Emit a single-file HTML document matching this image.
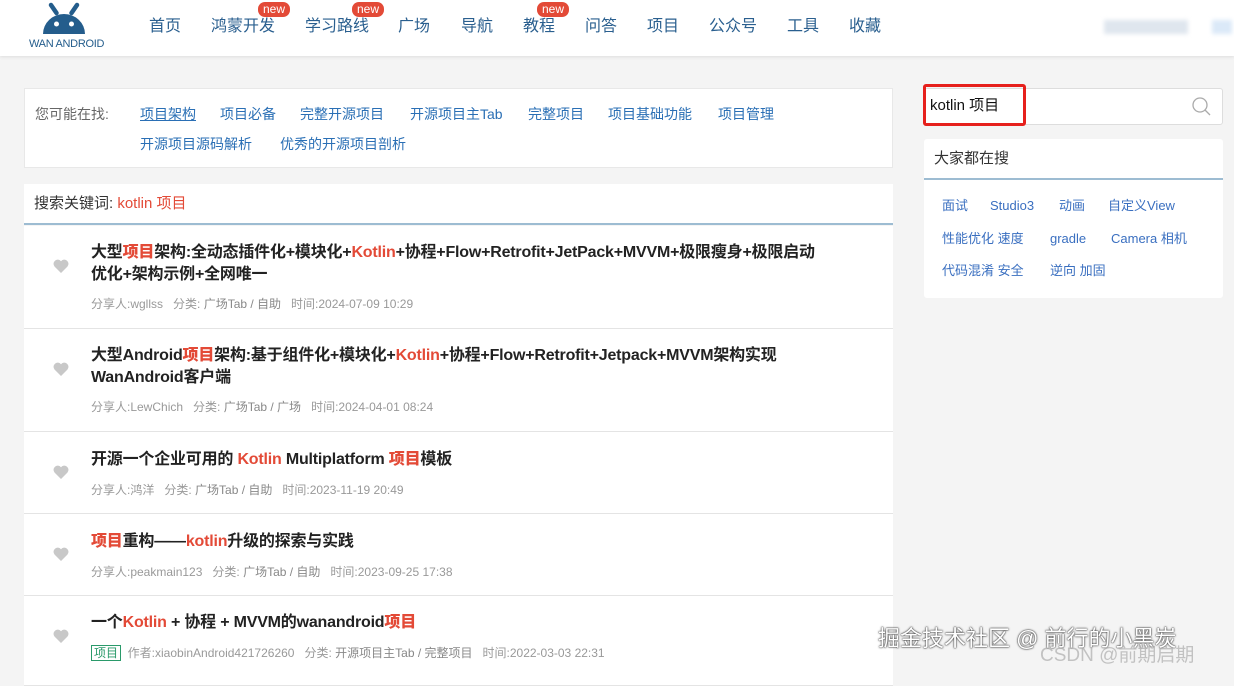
<!DOCTYPE html>
<html><head><meta charset="utf-8"><style>
*{margin:0;padding:0;box-sizing:border-box}
body{width:1234px;height:675px;overflow:hidden;background:#f4f4f4;font-family:"Liberation Sans","Noto Sans CJK SC",sans-serif;position:relative}
.hd{position:absolute;left:0;top:0;width:1234px;height:56px;background:#fff;box-shadow:0 1px 3px #ddd}
.nav a{position:absolute;top:15px;font-size:16px;line-height:24px;color:#2a5f8f;text-decoration:none}
.new{position:absolute;top:2px;background:#e34a37;color:#fff;font-size:12px;border-radius:7px;padding:0 5px;line-height:15px}
.box{position:absolute;background:#fff}
.sug span{position:absolute;font-size:14px;line-height:20px;color:#2a6fb5}
.item{position:absolute;left:24px;width:869px;background:#fff;border-bottom:1px solid #e4e4e4}
.t{position:absolute;left:67px;font-size:16px;font-weight:bold;color:#222;line-height:22px;width:735px;letter-spacing:-0.2px}
.t b{color:#e34a37}
.m{position:absolute;left:67px;font-size:12px;line-height:16px;color:#999}
.m i{font-style:normal;color:#888}
.heart{position:absolute;left:29px}
.hot span{position:absolute;font-size:13px;line-height:18px;color:#3a6fc0}
</style></head><body>
<div class="hd">
<svg style="position:absolute;left:41px;top:2px" width="46" height="34" viewBox="0 0 46 34"><path d="M10 3 L15.5 11 M36 3 L30.5 11" stroke="#245d8c" stroke-width="4.5" stroke-linecap="round"/><path d="M2 32 A21 20 0 0 1 44 32 Z" fill="#245d8c"/><circle cx="15.5" cy="22" r="2.5" fill="#fff"/><circle cx="30.5" cy="22" r="2.5" fill="#fff"/></svg>
<div style="position:absolute;left:29px;top:38px;font-size:11px;color:#245d8c;letter-spacing:-0.3px">WAN ANDROID</div>
<div class="nav">
<a style="left:149px">首页</a><a style="left:211px">鸿蒙开发</a><span class="new" style="left:258px">new</span>
<a style="left:305px">学习路线</a><span class="new" style="left:352px">new</span>
<a style="left:398px">广场</a><a style="left:461px">导航</a><a style="left:523px">教程</a><span class="new" style="left:537px">new</span>
<a style="left:585px">问答</a><a style="left:647px">项目</a><a style="left:709px">公众号</a><a style="left:787px">工具</a><a style="left:849px">收藏</a>
</div>
<div style="position:absolute;left:1104px;top:20px;width:84px;height:14px;background:#dfe6ee;filter:blur(2px)"></div>
<div style="position:absolute;left:1212px;top:20px;width:20px;height:14px;background:#dbe9f8;filter:blur(2px)"></div>
</div>
<div class="box sug" style="left:24px;top:88px;width:869px;height:80px;border:1px solid #e8e8e8">
<span style="left:10px;top:15px;color:#666">您可能在找:</span>
<span style="left:115px;top:15px;text-decoration:underline">项目架构</span><span style="left:195px;top:15px">项目必备</span><span style="left:275px;top:15px">完整开源项目</span><span style="left:385px;top:15px">开源项目主Tab</span><span style="left:503px;top:15px">完整项目</span><span style="left:583px;top:15px">项目基础功能</span><span style="left:693px;top:15px">项目管理</span>
<span style="left:115px;top:45px">开源项目源码解析</span><span style="left:255px;top:45px">优秀的开源项目剖析</span>
</div>
<div class="box" style="left:24px;top:184px;width:869px;height:41px;border-bottom:2px solid #9dbcd2">
<span style="position:absolute;left:10px;top:10px;font-size:15px;line-height:20px;color:#333">搜索关键词:&nbsp;<span style="color:#e34a37">kotlin 项目</span></span></div>
<svg width="0" height="0" style="position:absolute"><defs><symbol id="h" viewBox="0 0 16 14"><path d="M8 14 L1.5 7.5 A3.8 3.8 0 0 1 8 2.2 A3.8 3.8 0 0 1 14.5 7.5 Z" fill="#c8c8c8"/></symbol></defs></svg>
<div class="item" style="top:226px;height:103px"><svg class="heart" style="top:33px" width="16" height="14"><use href="#h"/></svg>
<div class="t" style="top:16px">大型<b>项目</b>架构:全动态插件化+模块化+<b>Kotlin</b>+协程+Flow+Retrofit+JetPack+MVVM+极限瘦身+极限启动优化+架构示例+全网唯一</div>
<div class="m" style="top:70px">分享人:wgllss &nbsp; 分类: <i>广场Tab / 自助</i> &nbsp; 时间:2024-07-09 10:29</div></div>
<div class="item" style="top:329px;height:103px"><svg class="heart" style="top:33px" width="16" height="14"><use href="#h"/></svg>
<div class="t" style="top:16px">大型Android<b>项目</b>架构:基于组件化+模块化+<b>Kotlin</b>+协程+Flow+Retrofit+Jetpack+MVVM架构实现WanAndroid客户端</div>
<div class="m" style="top:70px">分享人:LewChich &nbsp; 分类: <i>广场Tab / 广场</i> &nbsp; 时间:2024-04-01 08:24</div></div>
<div class="item" style="top:432px;height:82px"><svg class="heart" style="top:33px" width="16" height="14"><use href="#h"/></svg>
<div class="t" style="top:17px">开源一个企业可用的 <b>Kotlin</b> Multiplatform <b>项目</b>模板</div>
<div class="m" style="top:50px">分享人:鸿洋 &nbsp; 分类: <i>广场Tab / 自助</i> &nbsp; 时间:2023-11-19 20:49</div></div>
<div class="item" style="top:514px;height:82px"><svg class="heart" style="top:33px" width="16" height="14"><use href="#h"/></svg>
<div class="t" style="top:17px"><b>项目</b>重构——<b>kotlin</b>升级的探索与实践</div>
<div class="m" style="top:50px">分享人:peakmain123 &nbsp; 分类: <i>广场Tab / 自助</i> &nbsp; 时间:2023-09-25 17:38</div></div>
<div class="item" style="top:596px;height:90px"><svg class="heart" style="top:33px" width="16" height="14"><use href="#h"/></svg>
<div class="t" style="top:16px">一个<b>Kotlin</b> + 协程 + MVVM的wanandroid<b>项目</b></div>
<div class="m" style="top:49px"><span style="border:1px solid #2a9a6a;color:#2a9a6a;padding:0 2px">项目</span> &nbsp;作者:xiaobinAndroid421726260 &nbsp; 分类: <i>开源项目主Tab / 完整项目</i> &nbsp; 时间:2022-03-03 22:31</div></div>
<div class="box" style="left:924px;top:88px;width:299px;height:37px;border:1px solid #ddd;border-radius:3px">
<svg style="position:absolute;right:10px;top:8px" width="20" height="20"><circle cx="8" cy="8" r="7" stroke="#aaa" fill="none" stroke-width="1.3"/><path d="M13 13 L18 18" stroke="#aaa" stroke-width="1.3"/></svg></div>
<div style="position:absolute;left:923px;top:84px;width:103px;height:42px;border:3px solid #e6201c;border-radius:3px"></div>
<div style="position:absolute;left:930px;top:96px;font-size:15px;line-height:20px;color:#111">kotlin 项目</div>
<div class="box hot" style="left:924px;top:139px;width:299px;height:159px;border-radius:3px">
<div style="position:absolute;left:0;top:0;width:299px;height:41px;border-bottom:2px solid #9dbcd2;font-size:15px;line-height:20px;color:#333;padding:10px 10px">大家都在搜</div>
<span style="left:18px;top:58px">面试</span><span style="left:66px;top:58px">Studio3</span><span style="left:135px;top:58px">动画</span><span style="left:184px;top:58px">自定义View</span>
<span style="left:18px;top:91px">性能优化 速度</span><span style="left:126px;top:91px">gradle</span><span style="left:187px;top:91px">Camera 相机</span>
<span style="left:18px;top:123px">代码混淆 安全</span><span style="left:126px;top:123px">逆向 加固</span>
</div>
<div style="position:absolute;left:878px;top:624px;font-size:22px;line-height:30px;color:#fff;text-shadow:0 0 2px #333,0 0 1px #000">掘金技术社区 @ 前行的小黑炭</div>
<div style="position:absolute;left:1040px;top:644px;font-size:19px;line-height:24px;color:rgba(160,160,160,.6)">CSDN @前期启期</div>
</body></html>
